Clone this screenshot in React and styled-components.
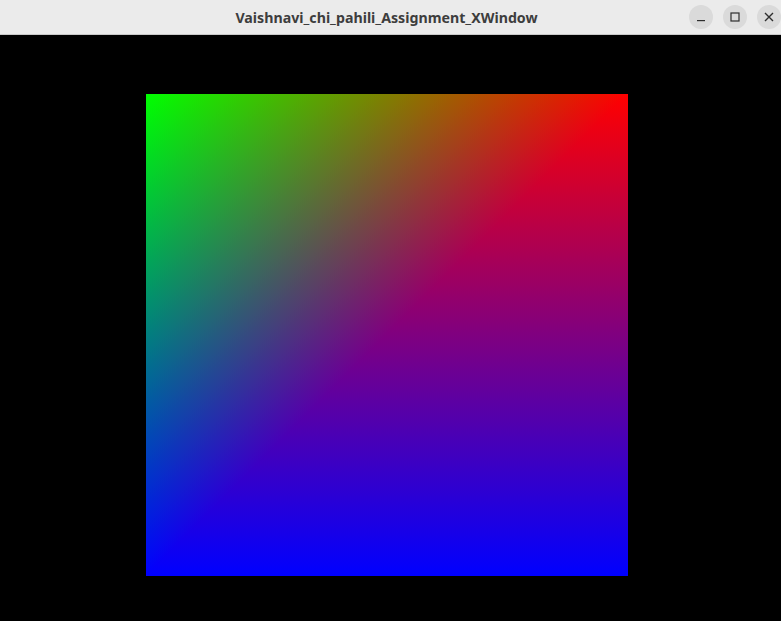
import styled, { createGlobalStyle } from "styled-components";

const GlobalStyle = createGlobalStyle`
  html, body {
    margin: 0;
    padding: 0;
    background: #000;
  }
  #root {
    width: 781px;
    height: 621px;
  }
`;

const Window = styled.div`
  width: 781px;
  height: 621px;
  display: flex;
  flex-direction: column;
  background: #000;
  font-family: 'Noto Sans', 'DejaVu Sans', sans-serif;
`;

const TitleBar = styled.div`
  height: 34px;
  flex-shrink: 0;
  background: #ebebeb;
  border-bottom: 1px solid #c9c9c9;
  display: grid;
  grid-template-columns: 1fr auto 1fr;
  align-items: center;
`;

const Title = styled.div`
  grid-column: 2;
  font-size: 14.2px;
  font-weight: 700;
  color: #3d3d3d;
  padding-right: 8px;
  padding-top: 1px;
`;

const Controls = styled.div`
  grid-column: 3;
  justify-self: end;
  display: flex;
  gap: 10px;
`;

const ControlButton = styled.div`
  width: 24px;
  height: 24px;
  border-radius: 50%;
  background: #dadada;
  display: flex;
  align-items: center;
  justify-content: center;
  color: #2e2e2e;
`;

const Canvas = styled.div`
  flex: 1;
  padding: 59px 153px 45px 146px;
  display: flex;
`;

const Quad = styled.div`
  width: 482px;
  height: 482px;
  background-image:
    linear-gradient(to bottom right, #00ff00 0%, #000000 50%, #000000 100%),
    linear-gradient(to bottom, #000000, #0000ff),
    linear-gradient(to bottom, #ff0000, #000000),
    linear-gradient(to right, #000000, #ff0000);
  background-blend-mode: lighten, lighten, darken, normal;
`;

function MinIcon() {
  return (
    <svg width="10" height="10" viewBox="0 0 10 10">
      <rect x="1" y="8" width="8" height="1.2" fill="currentColor" />
    </svg>
  );
}

function MaxIcon() {
  return (
    <svg width="10" height="10" viewBox="0 0 10 10">
      <rect x="1" y="1" width="8" height="8" fill="none" stroke="currentColor" strokeWidth="1.2" />
    </svg>
  );
}

function CloseIcon() {
  return (
    <svg width="10" height="10" viewBox="0 0 10 10">
      <path d="M1 1 L9 9 M9 1 L1 9" stroke="currentColor" strokeWidth="1.4" />
    </svg>
  );
}

export default function App() {
  return (
    <>
      <GlobalStyle />
      <Window>
        <TitleBar>
          <Title>Vaishnavi_chi_pahili_Assignment_XWindow</Title>
          <Controls>
            <ControlButton><MinIcon /></ControlButton>
            <ControlButton><MaxIcon /></ControlButton>
            <ControlButton><CloseIcon /></ControlButton>
          </Controls>
        </TitleBar>
        <Canvas>
          <Quad />
        </Canvas>
      </Window>
    </>
  );
}
